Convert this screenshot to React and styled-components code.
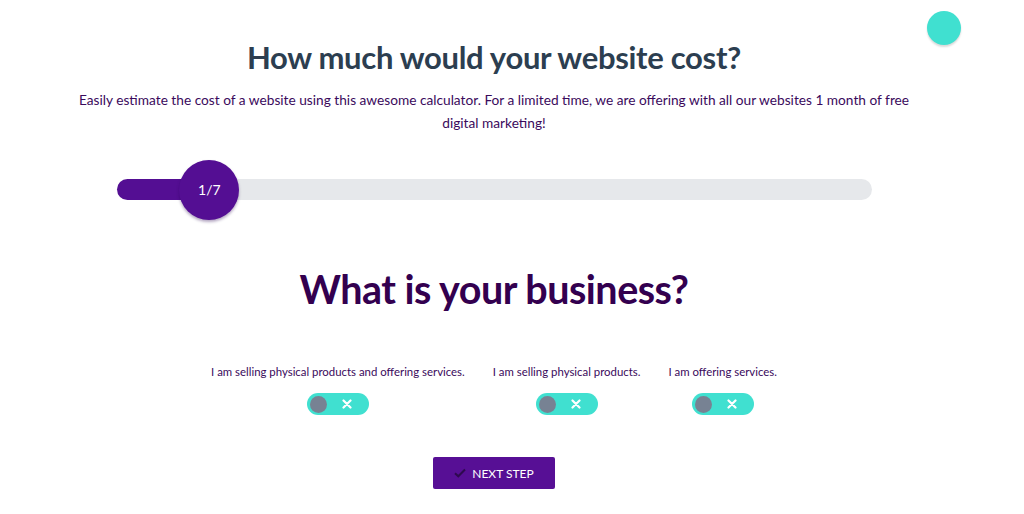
import styled, { createGlobalStyle } from "styled-components";

const GlobalStyle = createGlobalStyle`
  body {
    margin: 0;
    background: #ffffff;
    font-family: Lato, "Open Sans", sans-serif;
  }
`;

const options = [
  "I am selling physical products and offering services.",
  "I am selling physical products.",
  "I am offering services.",
];

const XIcon = () => (
  <svg width="10" height="10" viewBox="0 0 10 10">
    <path d="M1.5 1.5 L8.5 8.5 M8.5 1.5 L1.5 8.5" stroke="#fff" strokeWidth="2.2" strokeLinecap="round" />
  </svg>
);

const CheckIcon = () => (
  <svg width="12" height="10" viewBox="0 0 12 10">
    <path d="M1 5.2 L4.3 8.3 L11 1.5" stroke="#2e0a4f" strokeWidth="2" fill="none" />
  </svg>
);

const App = () => {
  const step = 1;
  const total = 7;
  return (
    <>
      <GlobalStyle />
      <Page>
        <Title>How much would your website cost?</Title>
        <Intro>
          Easily estimate the cost of a website using this awesome calculator. For a limited time, we are offering with all our websites 1 month of free digital marketing!
        </Intro>
        <Track>
          <Fill style={{ width: `${(step / total) * 100}%` }}>
            <Bubble>
              {step}/{total}
            </Bubble>
          </Fill>
        </Track>
        <Question>What is your business?</Question>
        <Options>
          {options.map((label) => (
            <Option key={label}>
              <OptionLabel>{label}</OptionLabel>
              <Toggle>
                <Knob />
                <XIcon />
              </Toggle>
            </Option>
          ))}
        </Options>
        <NextButton>
          <CheckIcon />
          NEXT STEP
        </NextButton>
      </Page>
      <FloatDot />
    </>
  );
};

export default App;

const Page = styled.div`
  display: flex;
  flex-direction: column;
  align-items: center;
  padding: 38px 54px 0 18px;
`;

const Title = styled.h1`
  margin: 0;
  font-size: 31px;
  line-height: 38px;
  font-weight: 700;
  color: #2c3e50;
  letter-spacing: -0.3px;
`;

const Intro = styled.p`
  margin: 12px 0 0;
  width: 860px;
  text-align: center;
  font-size: 13.7px;
  line-height: 23px;
  color: #3a0a5c;
`;

const Track = styled.div`
  margin-top: 45px;
  width: 755px;
  height: 21px;
  border-radius: 11px;
  background: #e6e8eb;
`;

const Fill = styled.div`
  position: relative;
  height: 100%;
  border-radius: 11px;
  background: #540e93;
`;

const Bubble = styled.div`
  position: absolute;
  right: -15px;
  top: 50%;
  transform: translateY(-50%);
  width: 60px;
  height: 60px;
  border-radius: 50%;
  background: #540e93;
  box-shadow: 0 2px 3px rgba(40, 0, 80, 0.35);
  display: flex;
  align-items: center;
  justify-content: center;
  color: #ffffff;
  font-size: 14px;
`;

const Question = styled.h2`
  margin: 64px 0 0;
  font-size: 39.5px;
  line-height: 50px;
  font-weight: 700;
  color: #33004f;
  letter-spacing: -0.5px;
`;

const Options = styled.div`
  margin-top: 50px;
  display: flex;
  gap: 28px;
`;

const Option = styled.div`
  display: flex;
  flex-direction: column;
  align-items: center;
  gap: 14px;
`;

const OptionLabel = styled.div`
  font-size: 11.4px;
  line-height: 15px;
  color: #3a0a5c;
`;

const Toggle = styled.div`
  width: 62px;
  height: 22px;
  border-radius: 11px;
  background: #40e0d0;
  display: flex;
  align-items: center;
  gap: 15px;
  padding: 0 3px;
  box-sizing: border-box;
`;

const Knob = styled.div`
  width: 17px;
  height: 17px;
  border-radius: 50%;
  background: #778293;
`;

const NextButton = styled.button`
  margin-top: 42px;
  width: 122px;
  height: 32px;
  border: none;
  border-radius: 2px;
  background: #570f95;
  color: #ffffff;
  font-family: Lato, sans-serif;
  font-size: 12px;
  display: flex;
  align-items: center;
  justify-content: center;
  gap: 6px;
  cursor: pointer;
`;

const FloatDot = styled.div`
  position: absolute;
  left: 927px;
  top: 11px;
  width: 34px;
  height: 34px;
  border-radius: 50%;
  background: #40e0d0;
  box-shadow: 0 2px 2px rgba(0, 0, 0, 0.15);
`;
